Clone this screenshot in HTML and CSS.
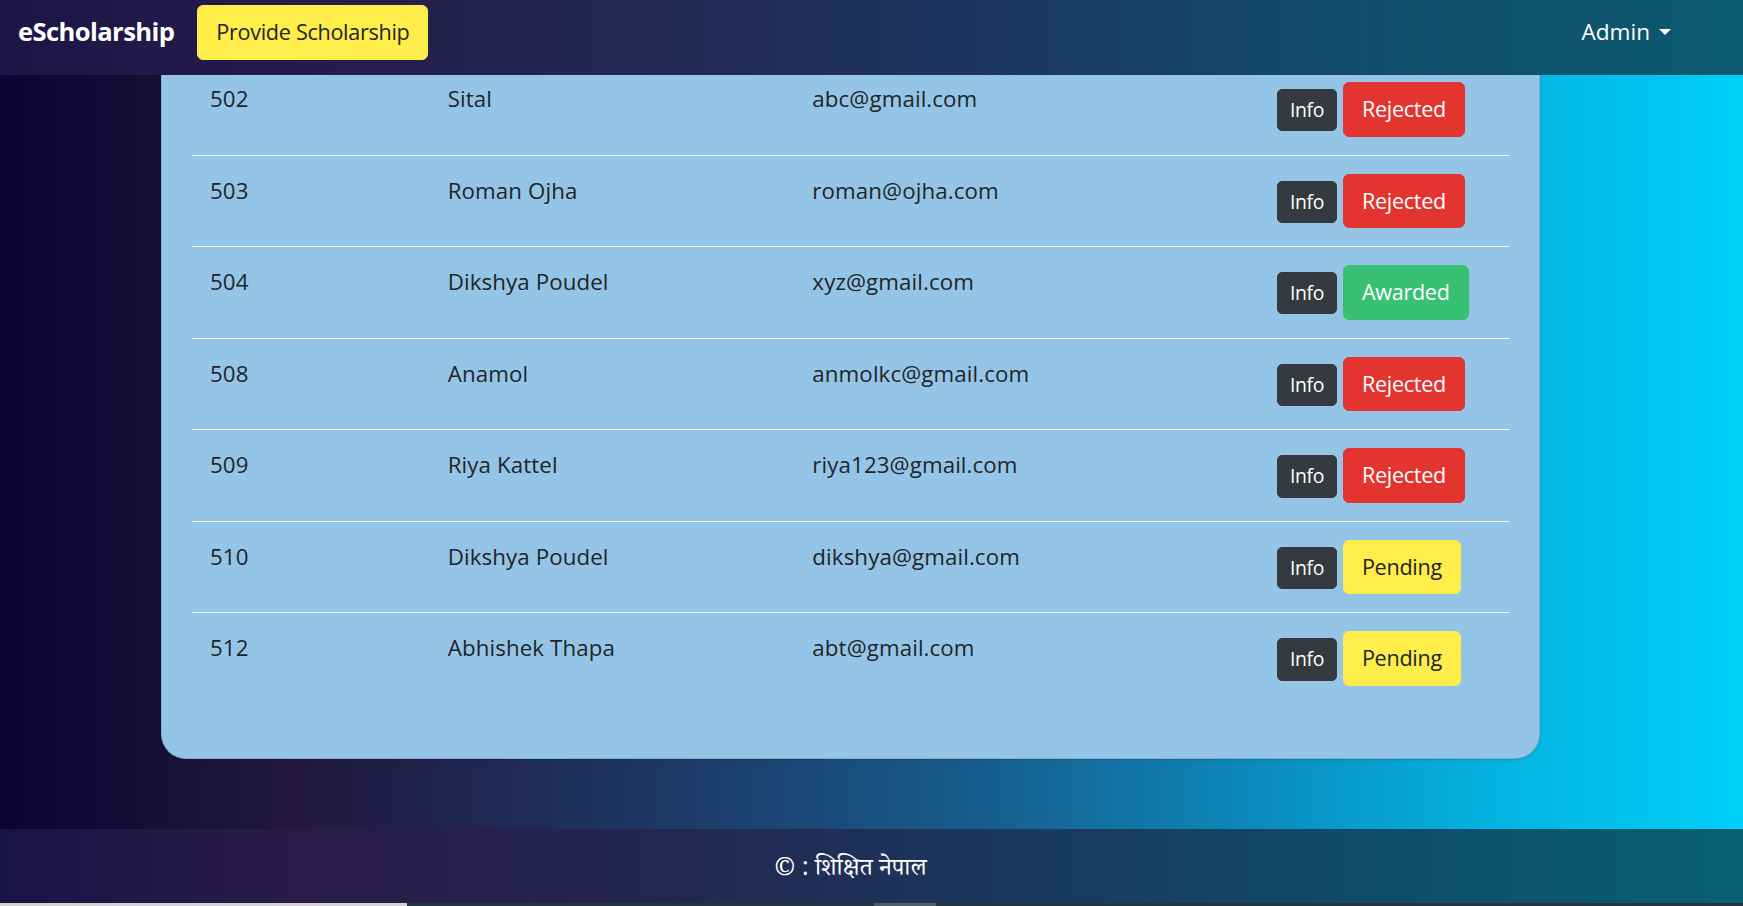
FILE: index.html
```html
<!DOCTYPE html>
<html lang="en">
<head>
<meta charset="utf-8">
<title>eScholarship</title>
<link rel="stylesheet" href="styles.css">
</head>
<body>
<nav class="navbar">
  <a class="brand" href="#">eScholarship</a>
  <a class="btn btn-warning" href="#">Provide Scholarship</a>
  <div class="nav-spacer"></div>
  <a class="nav-link dropdown-toggle" href="#">Admin</a>
</nav>

<main class="page">
  <div class="card">
    <div class="card-body">
      <table class="table">
        <colgroup>
          <col class="c-id"><col class="c-name"><col class="c-email"><col class="c-act">
        </colgroup>
        <tbody>
          <tr><td>502</td><td>Sital</td><td>abc@gmail.com</td><td><div class="actions"><a class="btn btn-sm btn-dark" href="#">Info</a><a class="btn btn-danger" href="#">Rejected</a></div></td></tr>
          <tr><td>503</td><td>Roman Ojha</td><td>roman@ojha.com</td><td><div class="actions"><a class="btn btn-sm btn-dark" href="#">Info</a><a class="btn btn-danger" href="#">Rejected</a></div></td></tr>
          <tr><td>504</td><td>Dikshya Poudel</td><td>xyz@gmail.com</td><td><div class="actions"><a class="btn btn-sm btn-dark" href="#">Info</a><a class="btn btn-success" href="#">Awarded</a></div></td></tr>
          <tr><td>508</td><td>Anamol</td><td>anmolkc@gmail.com</td><td><div class="actions"><a class="btn btn-sm btn-dark" href="#">Info</a><a class="btn btn-danger" href="#">Rejected</a></div></td></tr>
          <tr><td>509</td><td>Riya Kattel</td><td>riya123@gmail.com</td><td><div class="actions"><a class="btn btn-sm btn-dark" href="#">Info</a><a class="btn btn-danger" href="#">Rejected</a></div></td></tr>
          <tr><td>510</td><td>Dikshya Poudel</td><td>dikshya@gmail.com</td><td><div class="actions"><a class="btn btn-sm btn-dark" href="#">Info</a><a class="btn btn-warning" href="#">Pending</a></div></td></tr>
          <tr><td>512</td><td>Abhishek Thapa</td><td>abt@gmail.com</td><td><div class="actions"><a class="btn btn-sm btn-dark" href="#">Info</a><a class="btn btn-warning" href="#">Pending</a></div></td></tr>
        </tbody>
      </table>
    </div>
  </div>
</main>

<footer class="footer">
  <p class="footer-text">© : शिक्षित नेपाल</p>
</footer>

<div class="taskbar">
  <div class="tb-light"></div>
  <div class="tb-dark"></div>
  <div class="tb-thumb"></div>
  <div class="tb-dark tb-rest"></div>
</div>
</body>
</html>
```

FILE: styles.css
```css
* { box-sizing: border-box; }

html, body { margin: 0; padding: 0; }

body {
  height: 906px;
  overflow: hidden;
  font-family: "Open Sans", "Noto Sans", sans-serif;
  font-size: 21.6px;
  line-height: 1.6;
  color: #212529;
  background: linear-gradient(90deg, #0a0530 0%, #160f38 9%, #221840 17%, #202650 27%, #1d3c6a 40%, #175a8a 55%, #1178a9 66%, #0897c8 76%, #04b6e2 87%, #00d0f8 100%);
  display: flex;
  flex-direction: column;
}

a { text-decoration: none; }

/* ---------- navbar ---------- */
.navbar {
  position: fixed;
  top: 0;
  left: 0;
  right: 0;
  z-index: 10;
  height: 75px;
  padding: 5px 72px 15px 18px;
  display: flex;
  align-items: center;
  background: linear-gradient(90deg, #1b1646 0%, #261c4c 18%, #232650 35%, #1d355f 55%, #124d6b 78%, #0b5a6e 100%);
}

.brand {
  color: #fff;
  font-family: "Open Sans", sans-serif;
  font-weight: 700;
  font-size: 25.6px;
  letter-spacing: -0.6px;
  margin-right: 23px;
  line-height: 1.2;
}

.nav-spacer { flex: 1; }

.nav-link {
  color: #fff;
  font-size: 22.6px;
  line-height: 1.6;
}

.dropdown-toggle::after {
  content: "";
  display: inline-block;
  vertical-align: 5px;
  margin-left: 9px;
  border-top: 6.5px solid #fff;
  border-right: 6.5px solid transparent;
  border-left: 6.5px solid transparent;
}

/* ---------- buttons ---------- */
.btn {
  display: inline-block;
  font-family: "Open Sans", sans-serif;
  font-size: 21.6px;
  line-height: 34.56px;
  padding: 9px 18px;
  border: 1px solid transparent;
  border-radius: 6px;
  white-space: nowrap;
  letter-spacing: -0.3px;
}

.btn-sm {
  font-size: 19.4px;
  padding: 6px 12px;
  line-height: 28.35px;
  letter-spacing: -0.4px;
  border-radius: 5px;
}

.btn-warning { background: #ffed4a; border-color: #ffed4a; color: #212529; }
.btn-danger { background: #e3342f; border-color: #e3342f; color: #fff; }
.btn-success { background: #38c172; border-color: #38c172; color: #fff; }
.btn-dark { background: #343a40; border-color: #343a40; color: #fff; }

/* ---------- page / card ---------- */
.page {
  flex: 1;
  padding-left: 161px;
}

.card {
  width: 1379px;
  margin-top: 32px;
  background: #94c5e7;
  border: 1px solid rgba(0, 0, 0, 0.125);
  border-radius: 25px;
  box-shadow: 0 1px 2px rgba(0, 0, 0, 0.15);
}

.card-body { padding: 30px; }

.table {
  width: 100%;
  border-collapse: collapse;
  margin-bottom: 24px;
}

.c-id { width: 238px; }
.c-name { width: 365px; }
.c-email { width: 465px; }
.c-act { width: 250px; }

.table td {
  padding: 18px;
  vertical-align: top;
  border-top: 1px solid #ffffff;
  font-size: 22.3px;
  line-height: 34.56px;
  letter-spacing: 0.1px;
}

.actions {
  display: flex;
  align-items: baseline;
  gap: 6px;
}

/* ---------- footer ---------- */
.footer {
  height: 74px;
  padding: 12px 42px 0 0;
  display: flex;
  align-items: center;
  justify-content: center;
  background: linear-gradient(90deg, #181445 0%, #2a1c48 17%, #232650 38%, #1b385e 58%, #0f4d69 80%, #095f71 100%);
}

.footer-text {
  margin: 0;
  color: #fff;
  font-family: "Noto Serif Devanagari", "Noto Sans Devanagari", "Lohit Devanagari", "Liberation Serif", serif;
  font-size: 24.5px;
  line-height: 1.2;
}

/* ---------- bottom strip ---------- */
.taskbar {
  height: 3px;
  display: flex;
}
.tb-light { width: 407px; background: #d2d2d2; }
.tb-dark { width: 467px; background: #25353f; }
.tb-thumb { width: 62px; background: #4e5d63; }
.tb-rest { flex: 1; width: auto; }
```
